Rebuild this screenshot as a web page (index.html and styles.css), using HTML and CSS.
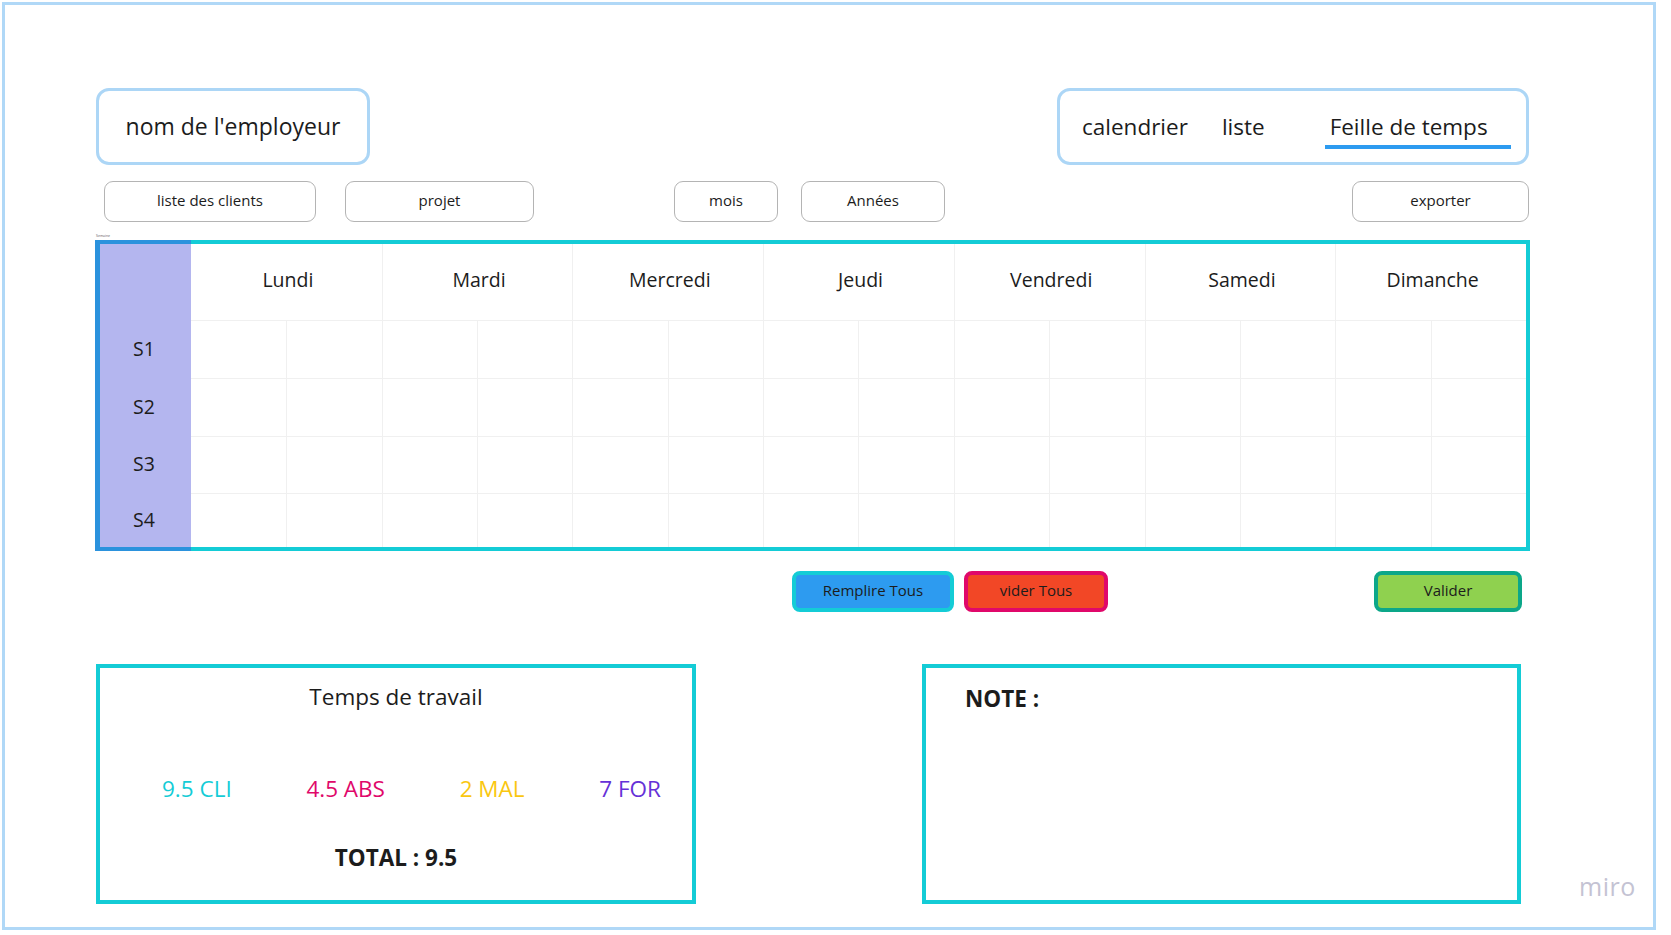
FILE: index.html
```html
<!DOCTYPE html>
<html lang="fr">
<head>
<meta charset="utf-8">
<title>Feuille de temps</title>
<link rel="stylesheet" href="styles.css">
</head>
<body>
<div class="frame">
  <div class="board">
    <div class="top-row">
      <div class="employer">nom de l'employeur</div>
      <nav class="tabs">
        <span class="tab tab-cal">calendrier</span>
        <span class="tab tab-list">liste</span>
        <span class="tab tab-active">Feille de temps</span>
      </nav>
    </div>

    <div class="filter-row">
      <button class="pill pill-clients">liste des clients</button>
      <button class="pill pill-project">projet</button>
      <button class="pill pill-month">mois</button>
      <button class="pill pill-year">Années</button>
      <button class="pill pill-export">exporter</button>
    </div>

    <div class="tiny-label">Semaine</div>

    <div class="timesheet">
      <div class="weeks">
        <div class="week-head"></div>
        <div class="week">S1</div>
        <div class="week">S2</div>
        <div class="week">S3</div>
        <div class="week">S4</div>
      </div>
      <div class="days">
        <div class="day-head">Lundi</div>
        <div class="day-head">Mardi</div>
        <div class="day-head">Mercredi</div>
        <div class="day-head">Jeudi</div>
        <div class="day-head">Vendredi</div>
        <div class="day-head">Samedi</div>
        <div class="day-head">Dimanche</div>

        <div class="cell"></div><div class="cell"></div><div class="cell"></div><div class="cell"></div><div class="cell"></div><div class="cell"></div><div class="cell"></div>
        <div class="cell"></div><div class="cell"></div><div class="cell"></div><div class="cell"></div><div class="cell"></div><div class="cell"></div><div class="cell"></div>
        <div class="cell"></div><div class="cell"></div><div class="cell"></div><div class="cell"></div><div class="cell"></div><div class="cell"></div><div class="cell"></div>
        <div class="cell"></div><div class="cell"></div><div class="cell"></div><div class="cell"></div><div class="cell"></div><div class="cell"></div><div class="cell"></div>
      </div>
    </div>

    <div class="actions">
      <button class="action action-fill">Remplire Tous</button>
      <button class="action action-clear">vider Tous</button>
      <button class="action action-valid">Valider</button>
    </div>

    <div class="summary-row">
      <section class="summary">
        <h2 class="summary-title">Temps de travail</h2>
        <div class="stats">
          <span class="stat stat-cli">9.5 CLI</span>
          <span class="stat stat-abs">4.5 ABS</span>
          <span class="stat stat-mal">2 MAL</span>
          <span class="stat stat-for">7 FOR</span>
        </div>
        <div class="total">TOTAL : 9.5</div>
      </section>
      <section class="note">
        <h2 class="note-title">NOTE :</h2>
      </section>
    </div>
  </div>
  <div class="miro">miro</div>
</div>
</body>
</html>
```

FILE: styles.css
```css
* {
  box-sizing: border-box;
}

html, body {
  margin: 0;
  padding: 0;
  background: #ffffff;
}

body {
  font-family: "Open Sans", "Liberation Sans", sans-serif;
  color: #1c1c1c;
}

.frame {
  position: relative;
  margin: 2px;
  width: 1654px;
  height: 928px;
  border: 3px solid #b0d8f7;
  background: #ffffff;
}

.board {
  width: 1525px;
  padding: 83px 0 0 91px;
}

/* ---------- top row ---------- */
.top-row {
  display: flex;
  align-items: flex-start;
}

.employer {
  width: 274px;
  height: 77px;
  border: 3px solid #acd6f6;
  border-radius: 13px;
  display: flex;
  align-items: center;
  justify-content: center;
  font-size: 23px;
  line-height: 31px;
  padding-bottom: 1px;
}

.tabs {
  margin-left: auto;
  margin-right: 1px;
  width: 472px;
  height: 77px;
  border: 3px solid #acd6f6;
  border-radius: 13px;
  display: flex;
  align-items: flex-start;
  padding: 20px 0 0 22px;
}

.tab {
  font-size: 22.5px;
  line-height: 31px;
  white-space: nowrap;
}

.tab-cal {
  margin-right: 34px;
}

.tab-list {
  margin-right: 60px;
}

.tab-active {
  padding: 0 23px 3px 5px;
  border-bottom: 4px solid #2d9bf0;
}

/* ---------- filters ---------- */
.filter-row {
  display: flex;
  margin-top: 16px;
}

.pill {
  height: 41px;
  border: 1px solid #b4b4b4;
  border-radius: 9px;
  background: #ffffff;
  font-family: "Open Sans", "Liberation Sans", sans-serif;
  font-size: 15px;
  color: #1c1c1c;
  padding: 0 0 4px;
}

.pill-clients { width: 212px; margin-left: 8px; }
.pill-project { width: 189px; margin-left: 29px; }
.pill-month   { width: 104px; margin-left: 140px; }
.pill-year    { width: 144px; margin-left: 23px; }
.pill-export  { width: 177px; margin-left: auto; margin-right: 1px; }

.tiny-label {
  margin-top: 11px;
  height: 7px;
  font-size: 3.5px;
  line-height: 5px;
  color: #666666;
}

/* ---------- timesheet ---------- */
.timesheet {
  display: flex;
  margin-left: -1px;
  width: 1435px;
  height: 311px;
}

.weeks {
  width: 96px;
  border-left: 5px solid #2b92dd;
  border-top: 4px solid #2b92dd;
  border-bottom: 4px solid #2b92dd;
  background: #b4b6ef;
  display: grid;
  grid-template-rows: 76px 58px 58px 57px 54px;
}

.week {
  display: flex;
  align-items: center;
  justify-content: center;
  font-size: 19.5px;
  padding: 0 3px 2px 0;
}

.days {
  flex: 1;
  border-top: 4px solid #14ccd6;
  border-right: 4px solid #14ccd6;
  border-bottom: 4px solid #14ccd6;
  display: grid;
  grid-template-columns: repeat(7, 1fr);
  grid-template-rows: 76px 58px 58px 57px 54px;
}

.day-head {
  display: flex;
  align-items: center;
  justify-content: center;
  font-size: 19.5px;
  padding: 0 0 6px 3px;
  border-left: 1px solid #f0f0f0;
}

.cell {
  border-left: 1px solid #f0f0f0;
  border-top: 1px solid #f0f0f0;
  background: linear-gradient(#f0f0f0, #f0f0f0) center / 1px 100% no-repeat;
}

.days > :nth-child(7n+1) {
  border-left: none;
}

/* ---------- actions ---------- */
.actions {
  display: flex;
  margin-top: 20px;
}

.action {
  height: 41px;
  border-width: 4px;
  border-style: solid;
  border-radius: 8px;
  font-family: "Open Sans", "Liberation Sans", sans-serif;
  font-size: 15px;
  color: #1c1c1c;
  padding: 0 0 4px;
}

.action-fill {
  width: 162px;
  margin-left: 696px;
  background: #2d9bf0;
  border-color: #14ccd6;
}

.action-clear {
  width: 144px;
  margin-left: 10px;
  background: #f24726;
  border-color: #e0086a;
}

.action-valid {
  width: 148px;
  margin-left: auto;
  margin-right: 8px;
  background: #8fd14f;
  border-color: #0ca789;
}

/* ---------- summary ---------- */
.summary-row {
  display: flex;
  margin-top: 52px;
}

.summary,
.note {
  height: 240px;
  border: 4px solid #14ccd6;
}

.summary {
  width: 600px;
  padding-top: 13px;
}

.summary-title {
  margin: 0;
  text-align: center;
  font-weight: 400;
  font-size: 22.5px;
  line-height: 31px;
}

.stats {
  display: flex;
  justify-content: space-between;
  padding: 0 31px 0 62px;
  margin-top: 61px;
}

.stat {
  font-size: 22.5px;
  line-height: 31px;
}

.stat-cli { color: #14ccd6; }
.stat-abs { color: #e0086a; }
.stat-mal { color: #fac710; }
.stat-for { color: #6631d7; }

.total {
  margin-top: 38px;
  text-align: center;
  font-weight: 700;
  font-size: 22.5px;
  line-height: 31px;
}

.note {
  width: 599px;
  margin-left: 226px;
  padding: 15px 0 0 39px;
}

.note-title {
  margin: 0;
  font-weight: 700;
  font-size: 22.5px;
  line-height: 31px;
}

/* ---------- watermark ---------- */
.miro {
  position: absolute;
  left: 1574px;
  top: 866px;
  font-size: 25px;
  line-height: 31px;
  letter-spacing: 0.5px;
  color: #c4c3d3;
}
```
